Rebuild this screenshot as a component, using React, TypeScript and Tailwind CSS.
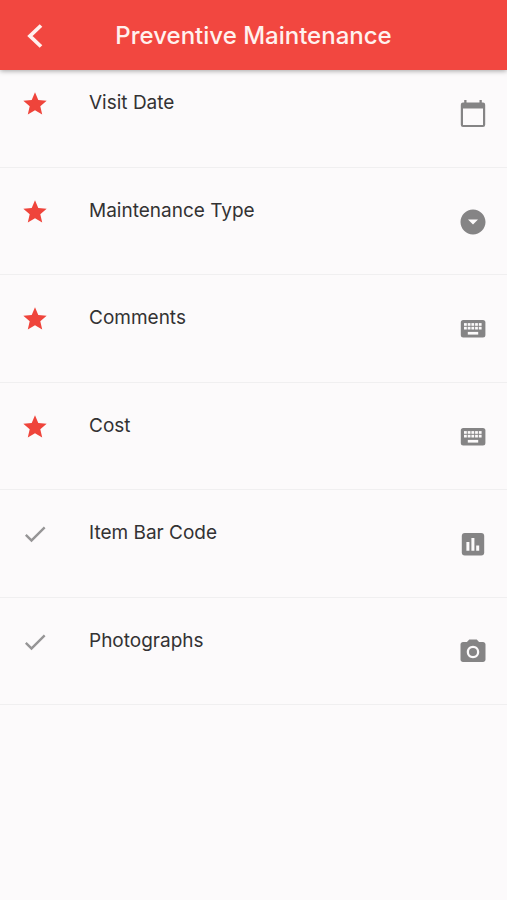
import type { ComponentType, SVGProps } from 'react'
import { MdArrowDropDownCircle, MdCheck, MdPhotoCamera, MdStar } from 'react-icons/md'

type IconProps = SVGProps<SVGSVGElement>

type Field = {
  label: string
  required: boolean
  icon: ComponentType<IconProps>
}

const CalendarIcon = (props: IconProps) => (
  <svg viewBox="0 0 30 30" fill="currentColor" fillRule="evenodd" {...props}>
    <path d="M6.2 1h2.3v2.6h13V1h2.3v2.6H25a2.2 2.2 0 0 1 2.2 2.2v20a2.2 2.2 0 0 1-2.2 2.2H5a2.2 2.2 0 0 1-2.2-2.2v-20A2.2 2.2 0 0 1 5 3.6h1.2zM5 9.6v16.3h20V9.6z" />
  </svg>
)

const KeyboardIcon = (props: IconProps) => (
  <svg viewBox="0 0 30 30" fill="currentColor" {...props}>
    <rect x="2.8" y="6" width="24.6" height="17.4" rx="2.5" />
    <g fill="#fcfafb">
      {[6, 9.7, 13.4, 17.1, 20.8].map(x => (
        <g key={x}>
          <rect x={x} y="9.1" width="2.8" height="2.7" />
          <rect x={x} y="12.8" width="2.8" height="2.7" />
        </g>
      ))}
      <rect x="9.8" y="17.9" width="10.4" height="2.7" />
    </g>
  </svg>
)

const ChartIcon = (props: IconProps) => (
  <svg viewBox="0 0 30 30" fill="currentColor" {...props}>
    <rect x="3.8" y="4" width="22.4" height="22.4" rx="3" />
    <path fill="#fcfafb" d="M8.4 13h3v8.7h-3zM13.4 9h3v12.7h-3zM18.2 16.6h3v5.1h-3z" />
  </svg>
)

const fields: Field[] = [
  { label: 'Visit Date', required: true, icon: CalendarIcon },
  { label: 'Maintenance Type', required: true, icon: MdArrowDropDownCircle },
  { label: 'Comments', required: true, icon: KeyboardIcon },
  { label: 'Cost', required: true, icon: KeyboardIcon },
  { label: 'Item Bar Code', required: false, icon: ChartIcon },
  { label: 'Photographs', required: false, icon: MdPhotoCamera },
]

const Header = () => (
  <header className="relative z-10 grid h-[70px] grid-cols-[70px_1fr_70px] items-center bg-[#f24740] pt-0.5 text-[#fff1ee] shadow-[0_1px_5px_rgba(0,0,0,0.35)]">
    <button type="button" aria-label="Back" className="flex h-full items-center justify-center">
      <svg viewBox="0 0 24 28" className="h-7 w-6" fill="none" stroke="currentColor" strokeWidth="3.8" aria-hidden="true">
        <path d="M18 3.5 7 14l11 10.5" />
      </svg>
    </button>
    <h1 className="text-center text-2xl font-medium whitespace-nowrap">Preventive Maintenance</h1>
  </header>
)

const FieldRow = ({ label, required, icon: Icon }: Field) => (
  <li className="h-[108px] border-b border-[#f0eff0] even:h-[107px]">
    <button type="button" className="flex h-full w-full items-start pr-[19px] pl-[21px] text-left">
      {required ? (
        <MdStar className="mt-[30px] size-7 shrink-0 text-[#ef443b]" aria-label="Required" />
      ) : (
        <MdCheck className="mt-[30px] size-7 shrink-0 text-[#969596]" aria-label="Optional" />
      )}
      <span className="mt-[29px] ml-10 flex-1 text-[19px] leading-7 text-[#333233]">{label}</span>
      <Icon className="mt-[39px] size-[30px] shrink-0 text-[#858485]" aria-hidden="true" />
    </button>
  </li>
)

const App = () => (
  <div className="min-h-screen bg-[#fcfafb] font-['Inter','Liberation_Sans',sans-serif]">
    <Header />
    {/* list is scrolled slightly under the app bar */}
    <main className="-mt-2.5">
      <ul>
        {fields.map(field => (
          <FieldRow key={field.label} {...field} />
        ))}
      </ul>
    </main>
  </div>
)

export default App
